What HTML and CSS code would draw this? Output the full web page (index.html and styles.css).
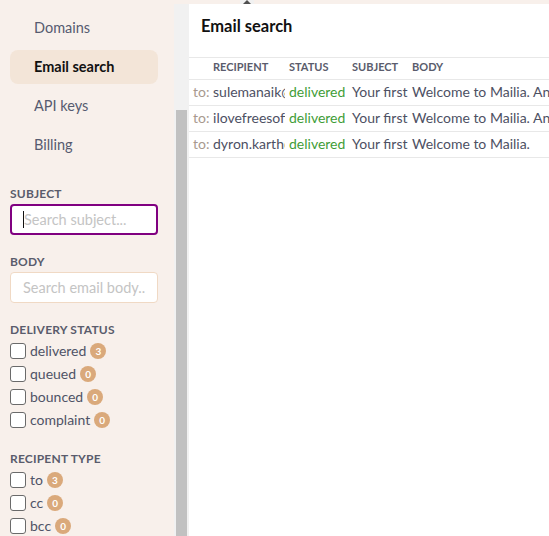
FILE: index.html
```html
<!DOCTYPE html>
<html>
<head>
<meta charset="utf-8">
<link rel="stylesheet" href="styles.css">
</head>
<body>
<div class="app">
  <aside class="sidebar">
    <nav class="nav">
      <div class="nav-item">Domains</div>
      <div class="nav-item active">Email search</div>
      <div class="nav-item">API keys</div>
      <div class="nav-item">Billing</div>
    </nav>

    <div class="label first">Subject</div>
    <div class="field focused"><span class="caret"></span><span class="ph">Search subject...</span></div>

    <div class="label">Body</div>
    <div class="field"><span class="ph">Search email body..</span></div>

    <div class="label group">Delivery status</div>
    <div class="checks">
      <div class="check"><span class="box"></span><span class="txt">delivered</span><span class="badge">3</span></div>
      <div class="check"><span class="box"></span><span class="txt">queued</span><span class="badge">0</span></div>
      <div class="check"><span class="box"></span><span class="txt">bounced</span><span class="badge">0</span></div>
      <div class="check"><span class="box"></span><span class="txt">complaint</span><span class="badge">0</span></div>
    </div>

    <div class="label group second">Recipent type</div>
    <div class="checks">
      <div class="check"><span class="box"></span><span class="txt">to</span><span class="badge">3</span></div>
      <div class="check"><span class="box"></span><span class="txt">cc</span><span class="badge">0</span></div>
      <div class="check"><span class="box"></span><span class="txt">bcc</span><span class="badge">0</span></div>
    </div>
  </aside>

  <div class="scrollbar"><div class="thumb"></div></div>

  <main class="main">
    <header class="header">Email search</header>
    <table class="results">
      <colgroup>
        <col class="c-rcpt"><col class="c-status"><col class="c-subject"><col class="c-body">
      </colgroup>
      <thead>
        <tr><th class="h-rcpt">Recipient</th><th>Status</th><th class="subj">Subject</th><th>Body</th></tr>
      </thead>
      <tbody>
        <tr><td><span class="to">to:</span> sulemanaik@example.com</td><td class="ok">delivered</td><td class="subj">Your first email</td><td>Welcome to Mailia. Any questions?</td></tr>
        <tr><td><span class="to">to:</span> ilovefreesoftware@example.com</td><td class="ok">delivered</td><td class="subj">Your first email</td><td>Welcome to Mailia. Any questions?</td></tr>
        <tr><td><span class="to">to:</span> dyron.karth@example.com</td><td class="ok">delivered</td><td class="subj">Your first email</td><td>Welcome to Mailia.</td></tr>
      </tbody>
    </table>
  </main>

  <div class="mini-arrow"><span></span></div>
</div>
</body>
</html>
```

FILE: styles.css
```css
* { box-sizing: border-box; }
html, body { margin: 0; height: 100%; }
body {
  background: #f8f0eb;
  font-family: Lato, "Noto Sans", sans-serif;
  color: #555a6e;
  overflow: hidden;
}
.app {
  display: flex;
  height: 536px;
  position: relative;
}
.sidebar {
  width: 174px;
  flex: none;
  padding: 11px 16px 0 10px;
}
.nav { display: flex; flex-direction: column; gap: 5px; }
.nav-item {
  height: 34px;
  line-height: 34px;
  padding-left: 24px;
  font-size: 14.5px;
  color: #565b70;
  border-radius: 8px;
}
.nav-item.active {
  background: #f3e5d8;
  color: #111;
  font-weight: 700;
}
.label {
  font-size: 12px;
  letter-spacing: 0.2px;
  font-weight: 700;
  text-transform: uppercase;
  line-height: 14px;
  color: #5a5c6c;
  margin-top: 20px;
  margin-bottom: 3px;
}
.label.first { margin-top: 25px; }
.label.group { margin-bottom: 2px; }
.label.second { margin-top: 21px; }
.field {
  height: 31px;
  background: #fff;
  border: 1px solid #f0d9c4;
  border-radius: 4px;
  display: flex;
  align-items: center;
  padding-left: 12px;
  white-space: nowrap;
  overflow: hidden;
  font-size: 14.5px;
}
.field.focused {
  border: 2px solid #800080;
  padding-left: 11px;
}
.caret {
  display: inline-block;
  width: 1px;
  height: 17px;
  background: #111;
}
.ph { color: #c4c4c4; }
.checks { display: flex; flex-direction: column; }
.check {
  height: 23px;
  display: flex;
  align-items: center;
  font-size: 14px;
  color: #4f5366;
}
.box {
  width: 16px;
  height: 16px;
  border: 1.5px solid #6a6a6a;
  border-radius: 3px;
  background: #fff;
  margin-right: 4px;
  flex: none;
}
.badge {
  width: 16px;
  height: 16px;
  border-radius: 50%;
  background: #daa97b;
  color: #fff;
  font-size: 10px;
  font-weight: 700;
  display: inline-flex;
  align-items: center;
  justify-content: center;
  margin-left: 4px;
}
.scrollbar {
  width: 15px;
  flex: none;
  margin-top: 4px;
  background: #f1f1f1;
  padding-left: 2px;
}
.thumb {
  width: 11px;
  height: 440px;
  margin-top: 106px;
  background: #c1c1c1;
}
.main {
  flex: 1;
  margin-top: 4px;
  background: #fff;
  min-width: 0;
  overflow: hidden;
}
.header {
  height: 54px;
  padding: 12px 0 0 12px;
  font-size: 16.5px;
  font-weight: 700;
  color: #111;
  border-bottom: 1px solid #e8e8e8;
}
.results {
  border-collapse: collapse;
  table-layout: fixed;
  width: 420px;
}
.c-rcpt { width: 96px; }
.c-status { width: 60px; }
.c-subject { width: 63px; }
.c-body { width: 201px; }
.results th {
  height: 21px;
  font-size: 11px;
  font-weight: 700;
  text-transform: uppercase;
  text-align: left;
  color: #5a5c6c;
  padding: 0 4px 4px;
  border-bottom: 1px solid #e8e8e8;
  white-space: nowrap;
  overflow: hidden;
}
.results th.h-rcpt { padding-left: 24px; }
.results th.subj, .results td.subj { padding-left: 7px; }
.results td {
  height: 26px;
  font-size: 14px;
  color: #4d5063;
  padding: 0 4px 1px;
  white-space: nowrap;
  overflow: hidden;
  border-bottom: 1px solid #e8e8e8;
}
.to { color: #a8998e; }
.results td.ok { color: #3f9d37; }
.mini-arrow {
  position: absolute;
  left: 240px;
  top: 0;
  width: 14px;
  height: 4px;
  background: #f1f1f1;
  display: flex;
  justify-content: center;
}
.mini-arrow span {
  width: 0;
  height: 0;
  border-left: 4px solid transparent;
  border-right: 4px solid transparent;
  border-bottom: 4px solid #505050;
}
```
